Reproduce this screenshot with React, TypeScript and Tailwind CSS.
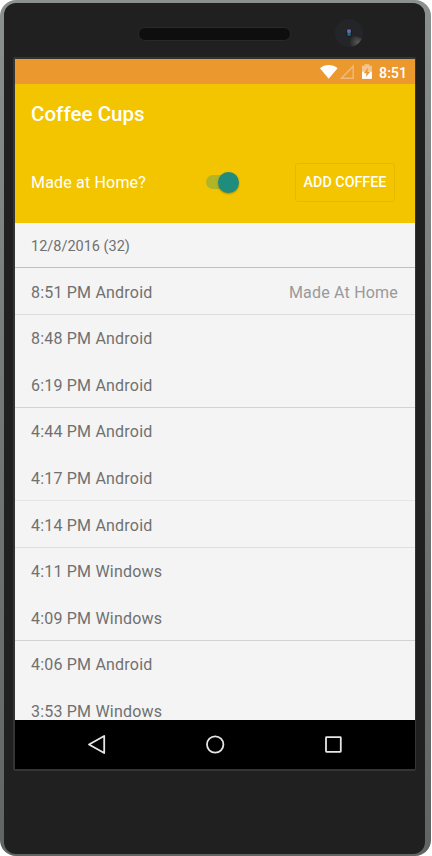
const rows = [
  { text: "8:51 PM Android", home: true, line: "border-[#dedede]", h: "h-[47px]" },
  { text: "8:48 PM Android", line: "border-transparent", h: "h-[46px]" },
  { text: "6:19 PM Android", line: "border-[#d3d3d3]", h: "h-[47px]" },
  { text: "4:44 PM Android", line: "border-transparent", h: "h-[46px]" },
  { text: "4:17 PM Android", line: "border-[#e5e5e5]", h: "h-[47px]" },
  { text: "4:14 PM Android", line: "border-[#dfdfdf]", h: "h-[47px]" },
  { text: "4:11 PM Windows", line: "border-transparent", h: "h-[46px]" },
  { text: "4:09 PM Windows", line: "border-[#d3d3d3]", h: "h-[47px]" },
  { text: "4:06 PM Android", line: "border-transparent", h: "h-[46px]" },
  { text: "3:53 PM Windows", line: "border-transparent", h: "h-[47px]" },
];

function StatusBar() {
  return (
    <div className="flex h-[25px] shrink-0 items-center justify-end bg-[#eb982f] pr-[8px]">
      <svg width="53" height="25" viewBox="320 59 53 25" className="block">
        <path d="M320 68.2C325 64 332.500 64 337.600 68.200L328.700 78.700Z" fill="#fff" />
        <path d="M353.200 66.200V78.200H341.500Z" fill="none" stroke="#f2b878" strokeWidth="1.500" />
        <path d="M362 65.700H364.600V64.200H369.300V65.700H371.900V71.500H362Z" fill="#f4c68f" />
        <path d="M362 71.500H371.900V78.900H362Z" fill="#fff" />
        <path d="M368 67.500L363.800 73.300H366.500L365.900 77L370.300 71.800H367.500Z" fill="#eb982f" />
      </svg>
      <span className="ml-[6px] mt-[2px] text-[14.200px] font-medium leading-5 text-white">8:51</span>
    </div>
  );
}

function AppBar() {
  return (
    <header className="flex h-[139px] shrink-0 flex-col bg-[#f3c500] text-white">
      <h1 className="pl-[16px] pt-[18px] text-[20.500px] font-medium leading-6 tracking-[0.05px]">Coffee Cups</h1>
      <div className="mt-[36px] flex h-10 items-center pl-4 pr-[20px]">
        <span className="w-[175px] pt-[2px] text-[16px] tracking-[0.18px]">Made at Home?</span>
        <div className="flex h-[14px] w-[33px] items-center justify-end rounded-full">
          <div className="h-[14px] w-[25px] rounded-l-full bg-[#b0b528]" />
          <div className="-ml-[13px] h-[21px] w-[21px] shrink-0 rounded-full bg-[#1f8c7d] shadow-[0_1px_2px_rgba(70,60,0,0.45)]" />
        </div>
        <button className="ml-auto h-[39px] w-[100px] whitespace-nowrap rounded-[3px] border border-[#e5b900] pt-[2px] text-[14.300px] font-medium">ADD COFFEE</button>
      </div>
    </header>
  );
}

function NavigationBar() {
  return (
    <nav className="h-[49px] shrink-0 bg-black">
      <svg width="400" height="49" viewBox="15 720 400 49" fill="none" stroke="#e6e6e6" strokeWidth="1.800" className="block">
        <path d="M104.200 736V753L89 744.500Z" strokeLinejoin="round" />
        <circle cx="215.200" cy="744.500" r="8.200" />
        <rect x="326" y="737.200" width="14.800" height="14.600" rx="0.500" />
      </svg>
    </nav>
  );
}

export default function App() {
  return (
    <main className="h-[856px] w-[432px] overflow-hidden bg-white font-['Roboto',sans-serif]">
      <div className="h-[856px] w-[431px] rounded-[16px] bg-linear-to-b from-[#8b918e] via-[#737876] to-[#606463] pb-[2px] pl-1 pr-[6px] pt-[3px]">
        <div className="h-full rounded-[12px] bg-[#202020] px-[9px]">
          <div className="flex h-[54px] items-start pl-[125px] pt-[24px]">
            <div className="h-[14px] w-[153px] rounded-full border border-[#292929] bg-[#0e0e0e]" />
            <svg width="28" height="28" viewBox="0 0 28 28" className="-mt-[8px] ml-[44px]">
              <defs>
                <clipPath id="lens"><circle cx="14" cy="14" r="14" /></clipPath>
                <radialGradient id="glint" cx="0.6" cy="0.6" r="0.6">
                  <stop offset="0" stopColor="#5a5855" />
                  <stop offset="1" stopColor="#242528" />
                </radialGradient>
              </defs>
              <circle cx="14" cy="14" r="14" fill="#242528" />
              <path d="M14 15L29 20V29H16Z" fill="url(#glint)" clipPath="url(#lens)" />
              <ellipse cx="14" cy="13.500" rx="3" ry="4.500" fill="#1b1c22" />
              <rect x="12" y="10.300" width="4" height="3.700" rx="1.300" fill="#6668a0" />
              <rect x="12.300" y="14" width="3.500" height="2.800" rx="1" fill="#16757c" />
            </svg>
          </div>
          <div className="flex h-[714px] w-[403px] flex-col overflow-hidden rounded-[2px] border-b-2 border-l-2 border-r border-t-2 border-[#343434]">
            <StatusBar />
            <AppBar />
            <section className="h-[497px] shrink-0 overflow-hidden bg-[#f4f4f4] text-[16px] tracking-[0.2px] text-[#707070]">
              <h2 className="flex h-[45px] items-center border-b border-[#adc9c4] pl-4 pt-[4px] text-[14.500px] tracking-normal">12/8/2016 (32)</h2>
              {rows.map((row) => (
                <div key={row.text} className={`flex items-center justify-between border-b pl-4 pr-[17px] pt-[3px] ${row.h} ${row.line}`}>
                  <span>{row.text}</span>
                  {row.home && <span className="text-[#999]">Made At Home</span>}
                </div>
              ))}
            </section>
            <NavigationBar />
          </div>
        </div>
      </div>
    </main>
  );
}
